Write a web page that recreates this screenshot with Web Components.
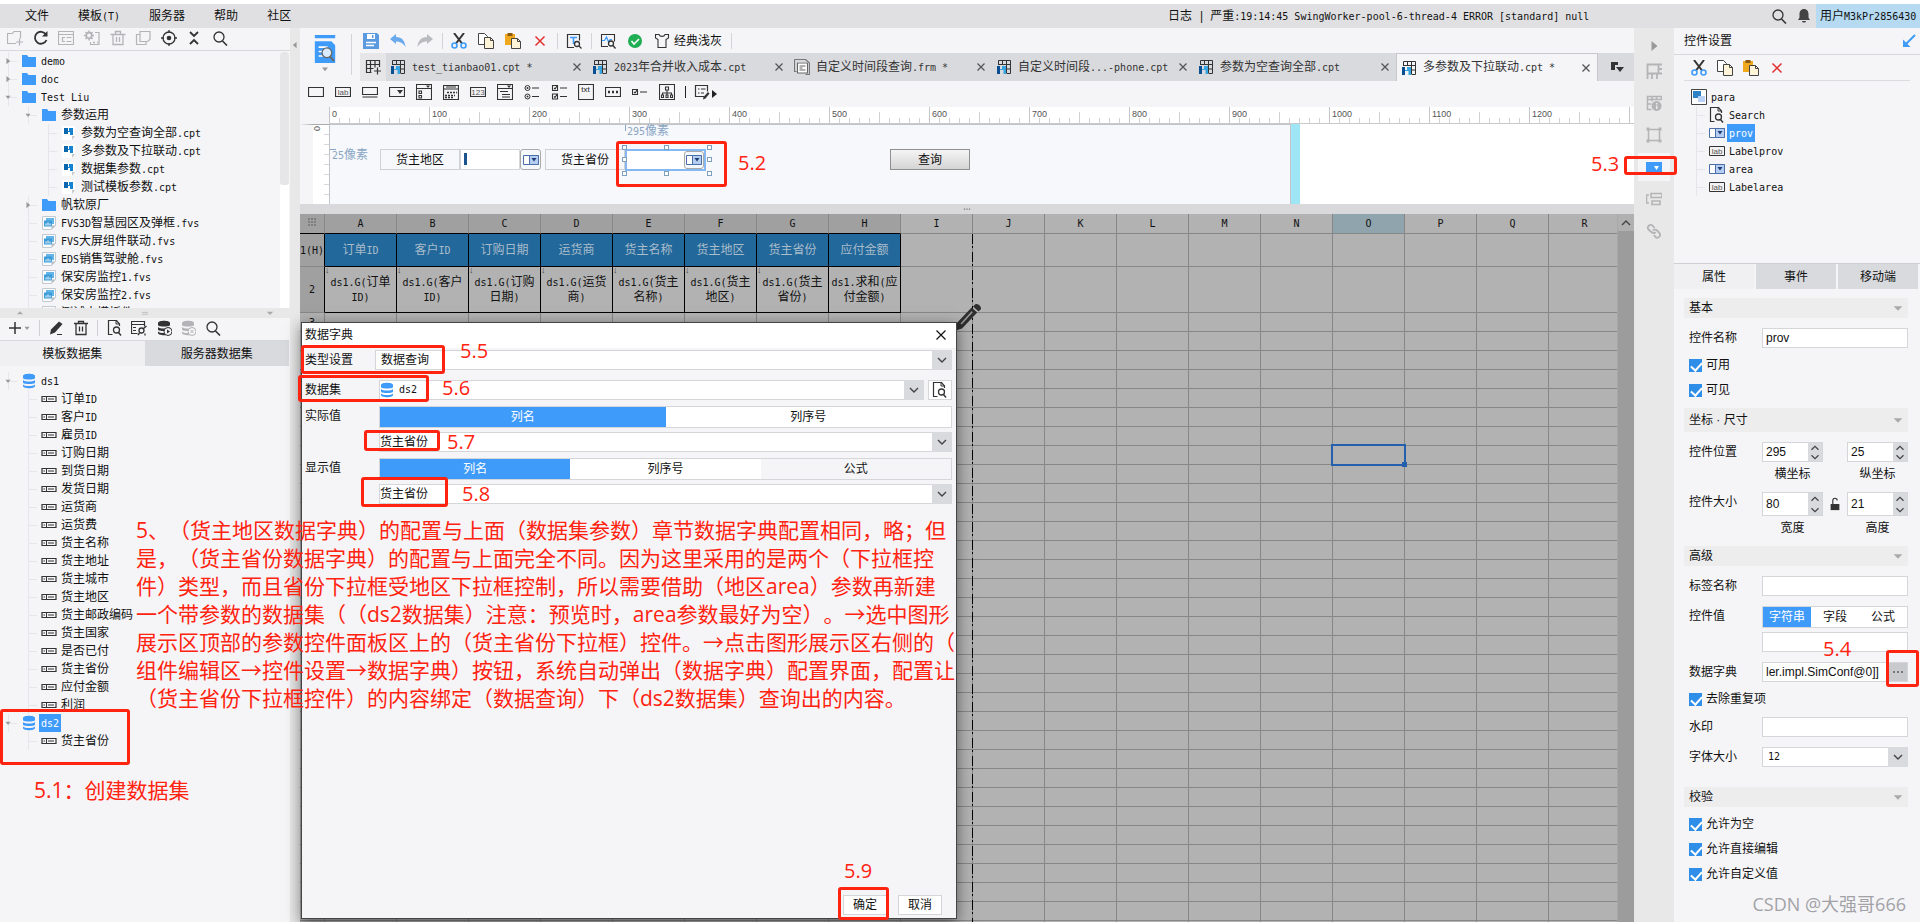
<!DOCTYPE html>
<html lang="zh-CN">
<head>
<meta charset="utf-8">
<title>报表设计器</title>
<style>
html,body{margin:0;height:100%;background:#fff}
body{font:12px/18px "Liberation Sans","Noto Sans CJK SC",sans-serif;color:#111;overflow:hidden}
</style>
</head>
<body>
<fr-app></fr-app>
<script>
/* ---------- shared helpers ---------- */
const BASE = `
*{box-sizing:border-box}
:host{display:block;min-width:0}
:host([hidden]){display:none}
.a{font-family:"DejaVu Sans Mono",monospace;font-size:10px;white-space:pre}
button,input,select{font:inherit;color:inherit;margin:0;border-radius:0}
button{background:none;border:0;padding:0;display:flex;align-items:center;justify-content:center;white-space:nowrap;cursor:pointer}
ul{list-style:none;margin:0;padding:0}
a{color:inherit;text-decoration:none}
`;
const mono = s => s.replace(/[\x20-\x7e]+/g, m => `<span class="a">${m}</span>`);
const def = (name, css, html) => customElements.define(name, class extends HTMLElement {
  connectedCallback() {
    if (this.shadowRoot) return;
    const tpl = document.createElement('template');
    tpl.innerHTML = `<style>${BASE}${css}</style>${html(this)}`;
    this.attachShadow({ mode: 'open' }).append(tpl.content.cloneNode(true));
  }
});

/* ---------- icons, 16 x 16 ---------- */
const K = '#333', G = '#b4b4b7', B = '#3f9bfa';
const s = (d, c = K, w = 1) => `<path d="${d}" fill="none" stroke="${c}" stroke-width="${w}"/>`;
const f = (d, c = K) => `<path d="${d}" fill="${c}"/>`;
const lens = (x, y, r, c = K) => `<circle cx="${x}" cy="${y}" r="${r}" fill="none" stroke="${c}" stroke-width="1.3"/>`;
const txt = (x, y, t, z = 8, c = '#555') => `<text x="${x}" y="${y}" font-size="${z}" text-anchor="middle" font-family="Liberation Sans" fill="${c}">${t}</text>`;
const combo = '<path d="M.5 3.5h15v9H.5z" fill="#fff" stroke="#4a6ea8"/><path d="M6.500 3.500h9v9h-9z" fill="#b5cdf0" stroke="#4a6ea8"/><path d="M8.500 6h5L11 9.500z" fill="#1d3c78"/>';
const pageLens = s('M12.500 6V4L9.500.500h-8v14h4', K, 1.200) + s('M9 .500V4h3.500', K) + lens(9.500, 10, 3) + s('M11.500 12.500l2.500 3', K, 1.400);
const DB = c => f('M2 3c0-3 12-3 12 0v2c0 2-12 2-12 0z', c) + f('M2 7c2 2 10 2 12 0v2.500c0 2-12 2-12 0z', c) + f('M2 11.500c2 2 10 2 12 0V13c0 3-12 3-12 0z', c);
const ICONS = {
  folder: f('M1 2h5l1.500 2H15v10H1z', B),
  cpt: f('M1 1h13v10l-3 4H1z', '#fff') + f('M11 15v-4h3z', '#c5c8cc') + f('M3 3h4v3h1V3h4v7h-3V7H7v2H3z', '#1583d2') + f('M3 3h4v6H3z', '#0b67ad'),
  fvs: f('M1.500 1.500h13v9l-4 4h-9z', '#fafcff') + s('M1.500 1.500h13v9l-4 4h-9z', '#c2c9d1') + f('M5 3h8v6H5z', '#64b4e8') + f('M3 5.500h8v6H3z', '#3c9cd8') + s('M5 10.500v-2M7 10.500v-3M9 10.500v-2', '#fff') + f('M10.500 14.500v-4h4z', '#b9c0c8'),
  field: s('M1 5.500h14v5H1z', K, 1.200) + s('M5.500 5.500v5M7 8h6M2.500 8h1.500', K),
  db: DB(B),
  folderplus: s('M9 13.500H.500v-10h5l1.500-2h6.500v7', G, 1.200) + s('M12.500 8.500v7M9 12h7', G, 1.200),
  refresh: s('M13 4.500A6 6 0 1 0 13.500 10', K, 1.800) + f('M14.500 1v5.500H9z', K),
  panel: s('M.500 1.500h15v13H.500zM.500 4.500h15M4.500 7v5M4.500 7.500H7M4.500 11.500H7M8.500 7.500h5M8.500 11.500h5', G, 1.200),
  gearpanel: `<circle cx="5" cy="5.500" r="2.800" fill="none" stroke="${G}" stroke-width="1.800"/>` + s('M5 .500v2M5 8.500v2M0 5.500h2M8 5.500h2M1.500 2l1.500 1.500M8.500 9L7 7.500M8.500 2L7 3.500M1.500 9L3 7.500', G, 1.500) + s('M11 2.500h4v12H6.500V12', G, 1.200) + s('M9 12.500h2M13 12.500h1', G, 1.500),
  trashg: s('M.500 4.500h15M3 4.500v10h10v-10M5.500 4V1.500h5V4M6.500 7v5M9.500 7v5', G, 1.300),
  trash: s('M1 3.500h14M3 3.500v11h10v-11M5.500 3.500v-2h5v2M6.500 6.500v5M9.500 6.500v5', K, 1.300),
  copyg: s('M5 1.500h10v8l-2.500 2H5zM5 4.500H1.500v10H11V12', G, 1.200),
  target: `<circle cx="8" cy="8" r="6" fill="none" stroke="${K}" stroke-width="1.300"/><circle cx="8" cy="8" r="2.300" fill="${K}"/>` + s('M8 0v3M8 13v3M0 8h3M13 8h3', K, 1.300),
  collapse: s('M4 2l4 4 4-4M4 14l4-4 4 4', K, 1.800),
  search: lens(7, 7, 5) + s('M10.500 11l4.500 4.500', K, 1.600),
  plus: s('M8 2v12M2 8h12', K, 1.500),
  down: f('M4 6h8l-4 5z', '#999'),
  up: f('M3 10h10L8 5z', '#aaa'),
  tridown: f('M3 6h10l-5 5z', '#aaa'),
  right: f('M5.500 3v10l6-5z', '#999'),
  left: f('M10.500 3v10l-6-5z', '#999'),
  pencil: f('M11 1.500l3.500 2.500-7.500 8.500-5 2 1-5z', K) + s('M9 14.500h5', K),
  tableplug: s('M6.500 13.500h-6v-12h13v5M.500 4.500h13M2 7.500h3M2 10.500h3', K, 1.200) + `<circle cx="10.500" cy="10.500" r="2.500" fill="none" stroke="${K}" stroke-width="1.300"/>` + s('M8.500 13L7 15M12.500 8.500l3-2.500M14 13.500v2', K, 1.300),
  dbplay: DB(K) + `<circle cx="12" cy="11.500" r="4" fill="#f5f5f8" stroke="${K}"/>` + f('M11 9.500v4l3-2z', K),
  dbx: DB(G) + `<circle cx="12" cy="11.500" r="4" fill="#f5f5f8" stroke="${G}"/>` + s('M10.500 10l3 3M13.500 10l-3 3', G),
  pagelens: pageLens,
  save: f('M0 0h14l2 2v14H0z', '#5b9ade') + f('M4 1h8v5H4z', '#fff') + f('M9 2h1.500v3H9z', '#5b9ade') + s('M3 9.500h10M3 12.500h8', '#fff', 1.300),
  undo: f('M0 6l6-5v3c6 0 9 4 9.500 10C13 10 10 8.500 6 8.500V11z', '#6aa9ec'),
  redo: f('M16 6l-6-5v3C4 4 1 8 .500 14 3 10 6 8.500 10 8.500V11z', '#b9bbbe'),
  cut: s('M3 0l8 10.500M13 0L5 10.500', K, 2) + `<circle cx="3.500" cy="12.500" r="2.500" fill="none" stroke="${B}" stroke-width="1.600"/><circle cx="12.500" cy="12.500" r="2.500" fill="none" stroke="${B}" stroke-width="1.600"/>`,
  copy: '<path d="M.500.500h6l3 3v8h-9z" fill="#fff" stroke="#444"/><path d="M6.500 4.500h6l3 3v8h-9z" fill="#fff3d8" stroke="#444"/><path d="M12.500 4.500v3h3" fill="none" stroke="#444"/>',
  paste: f('M0 1h10v11H0z', '#f0a81c') + f('M2.500 0h5v3h-5z', '#8a5a10') + '<path d="M6.500 5.500h6l3 3v7h-9z" fill="#fff3d8" stroke="#444"/><path d="M12.500 5.500v3h3" fill="none" stroke="#444"/>',
  del: s('M3.500 3.500l9 9M12.500 3.500l-9 9', '#e03030', 1.500),
  tsearch: s('M8 14.500H1.500v-13h12v6', K, 1.200) + s('M4 4.500h7M7.500 4.500V11', B, 1.600) + lens(11, 11, 2.500) + s('M13 13l2.500 2.500', K, 1.300),
  monitor: s('M8 13.500H1.500v-12h13v7', K, 1.100) + s('M2 7.500h2.500L6.500 4l2 5 1.500-2.500h2', B, 1.200) + lens(11, 10.500, 2.500) + s('M13 12.500l2.500 3', K, 1.300),
  ok: '<circle cx="8" cy="8" r="7" fill="#1fae54"/>' + s('M4.500 8l2.500 3 5-5', '#fff', 1.600),
  shirt: s('M5 1.500H1.500v3.500L4 6.500v8h8v-8l2.500-1.500V1.500H11c-1 2.500-5 2.500-6 0z', K, 1.100),
  newtab: s('M1.500 12V1.500h13V8M1.500 5.500h13M1.500 9.500h7M5.500 1.500v12M10 1.500v7M9 12h7M12.500 8.500v7M1.500 12v1.500h5', K, 1.200),
  sheet: s('M2.500 6V1.500h12v13H11M2.500 5.500h12M6.500 1.500v4M10.500 1.500v13M10.500 10h4', K, 1) + f('M1 7h3v3h2V7h4v8H7.500v-4H4v4H1z', '#35a4e0') + f('M1 7h3v8H1z', '#0b4f93'),
  frm: s('M.500.500h11l4 3.500v11.500h-4', '#777', 1.200) + s('M.500.500v12h2', '#777', 1.200) + f('M3 3h11v11H3z', '#fff') + s('M3.500 4h10v10h-10zM5.500 7h6M5.500 9h3M5.500 11h6', '#666', 1.100),
  close: s('M4.500 4.500l7 7M11.500 4.500l-7 7', '#555', 1.300),
  closeb: s('M3.500 3.500l9 9M12.500 3.500l-9 9', '#111', 1.200),
  tabmenu: f('M2 3h7v3H6v5H2z', K) + f('M7 8h8l-4 5z', K),
  w1: s('M.500 3.500h15v9H.500z', K, 1.200),
  w2: s('M.500 3.500h15v9H.500z', K, 1.200) + txt(8, 10.800, 'lab'),
  w3: s('M.500 3.500h15v7H.500zM.500 13h15', K, 1.200),
  w4: s('M.500 3.500h15v9H.500z', K, 1.200) + f('M8 6h6l-3 4z'),
  w5: s('M.500.500h15v15H.500zM.500 4.500h15M3 7h2.500v2.500H3zM3 11.500h2.500V14H3z', K, 1.100) + f('M10 1.500h4L12 4z'),
  w6: s('M.500 1.500h15v14H.500zM.500 5h15', K, 1.200) + s('M3 3h10', K) + '<path d="M4 8.500h10M2 11.500h10M2 13.500h8" stroke="#333" stroke-width="1.500" stroke-dasharray="2 1" fill="none"/>',
  w7: s('M.500 3.500h15v9H.500z', K, 1.200) + txt(8, 10.800, '123', 8),
  w8: s('M.500.500h15v15H.500zM.500 4.500h15M3 7.500h8M5 10.500h8M5 13h8', K, 1.100) + f('M10 1.500h4L12 4z'),
  w9: s('M8 4h7M8 12.500h7', K, 1.200) + '<circle cx="3.500" cy="4" r="2.500" fill="none" stroke="#333"/><circle cx="3.500" cy="12.500" r="2.500" fill="none" stroke="#333"/><circle cx="3.500" cy="4" r="1" fill="#333"/><circle cx="3.500" cy="12.500" r="1" fill="#333"/>',
  w10: s('M1.500 1.500h5v5h-5zM1.500 10h5v5h-5zM9 4h7M9 12.500h7M3 4l1 1 2-3M3 12.500l1 1 2-3', K, 1.100),
  w11: s('M.500.500h15v15H.500z', K, 1.200) + txt(7.500, 8, 'txt', 8, '#222'),
  w12: s('M.500 3.500h15v9H.500z', K, 1.200) + '<path d="M3 8h11" stroke="#333" stroke-width="2.500" stroke-dasharray="2 2" fill="none"/>',
  w13: s('M.500 5.500h5v5h-5zM2 8l1 1 2-3M8 8h7', K, 1.100),
  w14: s('M.500.500h15v15H.500zM6.500 3h3v3h-3zM8 6v3M3.500 11V9h9v2M2.500 11h2v2.500h-2zM7 11h2v2.500H7zM11.500 11h2v2.500h-2zM8 9v2', K, 1.100),
  w15: s('M10 12.500H1.500v-11h12v6M4 5h1.500M4 9h1.500M7 5h4.500M7 9h3', K, 1.200) + f('M14 8l1.500 1.500-4 5-2.500 1 .500-2.500z'),
  caret: f('M5 6v8l5-4z', '#222'),
  bell: f('M8 1c3 0 4.500 2.500 4.500 5v3.500l1.500 2.500H2l1.500-2.500V6C3.500 3.500 5 1 8 1zM6 13h4c0 2-4 2-4 0z', '#444'),
  dock: s('M14 2L4 12', B, 2) + f('M2 6.500V14h7.500z', B),
  s1: s('M1.500 16V1.500H16M1.500 10.500H16M12.500 1.500v9M12.500 6H16M6 10.500V16M11 10.500V16', G, 1.800),
  s2: s('M1.500 1.500h14v3h-14zM1.500 1.500v13h4M1.500 9h4M6 1.500v5M10.500 1.500v3', G, 1.500) + f('M10.500 6a5 5 0 1 0 .1 0zM10 8h1.500v1.500H10zM10 10.500h1.500V14H10z', G),
  s3: s('M2.500 2.500h11v11h-11z', G, 1.500) + f('M.500.500h3v3h-3zM12.500.500h3v3h-3zM.500 12.500h3v3h-3zM12.500 12.500h3v3h-3z', G),
  s4: f('M0 3h16v11H0z', B) + f('M8 7h5l-2.500 4z', '#fff'),
  s5: s('M5 2.500h11v4H5zM6 10h8v3.500H6zM3 4H.500v8H3', G, 1.600),
  s6: s('M8.500 5l-2-2.500c-3-2-6 1.500-4 4L6 9.500c1 1 3 .5 3.500-.5M7 7.500c1-1.500 3-1 4 0l2.500 2.500c2 3-1.500 6-4 4L8 12', G, 1.800),
  para: '<path d="M.500.500h15v15H.500z" fill="#fff" stroke="#444"/>' + f('M2 2h8v7H2z', '#2c82c4') + f('M7 7h7v6H7z', '#b9d2f5'),
  combo, lab: '<path d="M.500 3.500h15v9H.500z" fill="#f2f2f2" stroke="#333"/>' + txt(8, 10.800, 'lab'),
  lock: f('M3 8h10v7H3z', K) + s('M5.500 8V4c0-3.500 5-3.500 5 0', K, 1.300),
  chev: s('M4 6l4 4 4-4', '#444', 1.400),
  chevup: s('M4 10l4-4 4 4', '#444', 1.400),
  grip: '<path d="M3 4h11M3 8h11M3 12h11" stroke="#666" stroke-width="2" stroke-dasharray="2 2" fill="none"/>',
  bigpen: f('M11.500.800c1.200-1.100 4 1.200 3.200 2.800l-1.200 1.200-3.200-2.800z', '#2e2e2e') + f('M9.500 2.600l3.200 2.800L4 14.500l-4 1.300.600-4z', '#2e2e2e') + s('M9.800 5L3.500 12', '#9a9a9a', .9),
  bigsearch: f('M0 0h16v2.500H0zM0 5h13l3 3v14H0z', B) + s('M3 9.500h7M3 13h4M3 16.500h4', '#fff', 1.300) + '<circle cx="9.500" cy="14" r="3.800" fill="#d9ecff" stroke="#666"/>' + s('M12 17l3 3.500', '#666', 1.500),
  eq: s('M3 7h10M3 10h10', '#aaa'),
  dots: '<path d="M3 8h10" stroke="#777" stroke-width="2" stroke-dasharray="2 2" fill="none"/>'
};
def('fr-icon', `:host{display:inline-block;flex:none;width:16px;height:16px}svg{display:block;width:100%;height:100%}`,
  e => `<svg viewBox="0 0 16 ${e.getAttribute('vh') || 16}" aria-hidden="true">${ICONS[e.getAttribute('name')]}</svg>`);
const ic = (n, extra = '') => `<fr-icon name="${n}" ${extra}></fr-icon>`;
const ib = (n, label = n) => `<button aria-label="${label}">${ic(n)}</button>`;

/* ---------- menu bar ---------- */
def('fr-menubar', `
:host{background:#e0e0e2;height:24px}
nav{display:flex;align-items:center;height:24px;padding-left:25px;white-space:nowrap}
.m{margin-right:29px}
.log{margin-left:auto;width:603px}
.log b{font-weight:400;margin:0 7px 0 8px}
.right{display:flex;align-items:center;height:24px;width:149px}
.right button+button{margin:0 4px 0 9px}
.user{background:#b5daf2;height:24px;line-height:24px;padding-left:4px;width:104px}
`, () => `<nav>${['文件', '模板(T)', '服务器', '帮助', '社区'].map(x => `<a class="m" href="#">${mono(x)}</a>`).join('')}
<span class="log">日志<b>|</b>${mono('严重:19:14:45 SwingWorker-pool-6-thread-4 ERROR [standard] null')}</span>
<span class="right">${ib('search', '搜索')}${ib('bell', '通知')}<a class="user" href="#">${mono('用户M3kPr2856430')}</a></span></nav>`);

/* ---------- tree ---------- */
const leaf = (d, i, t) => ({ d, i, t });
const TREES = {
  files: [{ d: 0, i: 'folder', t: 'demo', x: 'right' }, { d: 0, i: 'folder', t: 'doc', x: 'right' }, { d: 0, i: 'folder', t: 'Test Liu', x: 'down' },
  { d: 1, i: 'folder', t: '参数运用', x: 'down' }, ...['参数为空查询全部.cpt', '多参数及下拉联动.cpt', '数据集参数.cpt', '测试模板参数.cpt'].map(t => leaf(2, 'cpt', t)),
  { d: 1, i: 'folder', t: '帆软原厂', x: 'right' }, ...['FVS3D智慧园区及弹框.fvs', 'FVS大屏组件联动.fvs', 'EDS销售驾驶舱.fvs', '保安房监控1.fvs', '保安房监控2.fvs', '测试大模板件.fvs'].map(t => leaf(1, 'fvs', t))],
  data: [{ d: 0, i: 'db', t: 'ds1', x: 'down' }, ...['订单ID', '客户ID', '雇员ID', '订购日期', '到货日期', '发货日期', '运货商', '运货费', '货主名称', '货主地址', '货主城市', '货主地区', '货主邮政编码', '货主国家', '是否已付', '货主省份', '应付金额', '利润'].map(t => leaf(1, 'field', t)),
  { d: 0, i: 'db', t: 'ds2', x: 'down', sel: 1 }, leaf(1, 'field', '货主省份')],
  widgets: [{ d: 0, i: 'para', t: 'para', root: 1 }, leaf(1, 'pagelens', 'Search'), { d: 1, i: 'combo', t: 'prov', sel: 1 }, leaf(1, 'lab', 'Labelprov'), leaf(1, 'combo', 'area'), leaf(1, 'lab', 'Labelarea')]
};
def('fr-tree', `
li{display:flex;align-items:center;height:18px;white-space:nowrap;padding-left:calc(var(--x,4px) + var(--d)*20px)}
.g{width:17px;height:18px;flex:none;display:flex;align-items:center;
background:linear-gradient(#e6e6ea,#e6e6ea) 4px 0/1px 100% no-repeat,linear-gradient(#e6e6ea,#e6e6ea) 4px 9px/9px 1px no-repeat}
.g.none{background:none}
.g fr-icon{width:10px;height:12px;margin-left:-1px}
.t{margin-left:2px;padding:0 2px;height:18px;line-height:18px}
.sel{background:${B};color:#fff}
`, e => `<ul role="tree">${TREES[e.getAttribute('kind')].map(n => `<li role="treeitem" style="--d:${n.d}"><span class="g ${n.root ? 'none' : ''}">${n.x ? ic(n.x) : ''}</span>${ic(n.i)}<span class="t ${n.sel ? 'sel' : ''}">${mono(n.t)}</span></li>`).join('')}</ul>`);

/* ---------- left side ---------- */
def('fr-left', `
:host{display:flex;flex-direction:column;background:#f5f5f8;overflow:hidden}
.bar{display:flex;align-items:center;justify-content:space-between;height:22px;padding:0 62px 2px 7px;flex:none}
.files{height:258px;flex:none;border-top:1px solid #d8d8dc;padding-top:1px;display:flex;overflow:hidden;margin-top:0}
.files fr-tree{flex:1}
.sb{width:9px;background:#fff;margin-right:1px}
.sb div{height:133px;background:#e6e6e9;border-radius:3px}
.split{height:10px;background:#e8e8e8;display:flex;align-items:center;justify-content:space-between;padding:0 12px;flex:none}
.split fr-icon{height:10px}
.bar2{padding:0 69px 2px 7px}
.bar2 i{width:1px;height:16px;background:#d0d0d4}
.add{margin-right:-2px}.add fr-icon+fr-icon{width:10px;margin-left:-1px}
.tabs{display:flex;height:26px;border-top:1px solid #d8d8dc;flex:none;margin-right:1px}
.tabs button{flex:1;background:#f0f0f3}
.tabs button+button{background:#d8dade}
fr-tree.d{padding-top:6px}
`, () => `<div class="bar">${['folderplus', 'refresh', 'panel', 'gearpanel', 'trashg', 'copyg', 'target', 'collapse', 'search'].map(n => ib(n)).join('')}</div>
<div class="files"><fr-tree kind="files"></fr-tree><div class="sb"><div></div></div></div>
<div class="split">${ic('up')}${ic('eq')}${ic('tridown')}</div>
<div class="bar bar2"><button class="add" aria-label="新建">${ic('plus')}${ic('down')}</button><i></i>${ib('pencil')}${ib('trash')}<i></i>${['pagelens', 'tableplug', 'dbplay', 'dbx', 'search'].map(n => ib(n)).join('')}</div>
<div class="tabs" role="tablist"><button role="tab">模板数据集</button><button role="tab">服务器数据集</button></div>
<fr-tree class="d" kind="data"></fr-tree>`);

/* ---------- top of the centre column ---------- */
def('fr-toolbars', `
.top{display:grid;grid-template-columns:60px 1fr;height:53px}
.big{border-right:1px solid #d4d4d8;margin:6px 8px 6px 0;padding:1px 14px 0;width:52px}
.big fr-icon{width:22px;height:28px}.big fr-icon+fr-icon{width:12px;height:12px}
.big button{flex-direction:column}
.tools{display:flex;align-items:center;height:25px;padding-left:3px}
.tools button{margin-right:11px;gap:4px}
.tools i{width:1px;height:16px;background:#d4d4d8;margin:0 8px 0 -2px}
.tabs{display:flex;height:28px;background:#d9dadd;color:#333}
.new{width:26px;background:#e6e6e9}
.tab{width:202px;display:flex;align-items:center;padding:0 3px 0 4px;white-space:nowrap;min-width:0}
.tab span.n{margin:0 auto 0 6px}
.tab.on{background:#f5f5f8;border:solid #c8c8cc;border-width:1px 1px 0}
.menu{width:38px}
.wid{display:flex;height:26px;padding:3px 0 0 8px;gap:11px}
.wid button{height:16px}.wid i{width:1px;height:12px;background:#222;margin:2px -3px 0 -1px}
.wid button:last-child{margin-left:-14px}
`, () => `<div class="top"><div class="big"><button aria-label="预览">${ic('bigsearch', 'vh="22"')}${ic('down')}</button></div>
<div><div class="tools">${ib('save', '保存')}${ib('undo', '撤销')}${ib('redo', '重做')}<i></i>${ib('cut')}${ib('copy')}${ib('paste')}${ib('del')}<i></i>${ib('tsearch')}<i></i>${ib('monitor')}${ib('ok')}<button>${ic('shirt')}经典浅灰</button><i></i></div>
<div class="tabs"><button class="new" aria-label="新建">${ic('newtab')}</button>${[['sheet', 'test_tianbao01.cpt *'], ['sheet', '2023年合并收入成本.cpt'], ['frm', '自定义时间段查询.frm *'], ['sheet', '自定义时间段...-phone.cpt'], ['sheet', '参数为空查询全部.cpt'], ['sheet', '多参数及下拉联动.cpt *']].map((x, i) => `<div class="tab ${i == 5 ? 'on' : ''}">${ic(x[0])}<span class="n">${mono(x[1])}</span><button aria-label="关闭">${ic('close')}</button></div>`).join('')}<button class="menu" aria-label="更多">${ic('tabmenu')}</button></div></div></div>
<div class="wid">${Array.from({ length: 14 }, (_, i) => ib('w' + (i + 1))).join('')}<i></i>${ib('w15')}${ib('caret')}</div>`);

/* ---------- ruler and parameter pane ---------- */
def('fr-params', `
:host{overflow:hidden;color:#111}
.ruler{height:17px;margin-left:29px;border-bottom:1px solid #c9c9cc;display:flex;overflow:hidden;color:#555;font-size:9px;line-height:14px;
background:repeating-linear-gradient(90deg,#c6c6ca 0 1px,transparent 1px 100px),repeating-linear-gradient(90deg,#d2d2d6 0 1px,transparent 1px 50px) 0 5px,repeating-linear-gradient(90deg,#d2d2d6 0 1px,transparent 1px 10px) 0 11px,#fff;background-repeat:repeat-x}
.ruler span{flex:none;width:100px;padding-left:3px}
.row{display:flex;height:80px;background:#fff}
.v{width:29px;border-left:13px solid #f5f5f8;border-top:1px solid #aaa;flex:none;font-size:9px;line-height:12px;color:#555;
background:repeating-linear-gradient(#d8d8dc 0 1px,transparent 1px 10px) 11px 9px/6px 70px no-repeat,#fff}
.v span{display:block;writing-mode:vertical-rl;margin:1px 0 0 -1px;line-height:10px}
.pane{position:relative;width:962px;background:#f7f8fb;border:solid #c3c4c8;border-width:1px 1px 0 1px}
.edge{width:9px;background:#9ee5f5}
.pane>*{position:absolute}
.dim{color:#8aa6c4;border:0 solid #8aa6c4;line-height:14px;white-space:nowrap}
.lb{border:1px solid #cfd0d4;width:80px;height:21px;line-height:20px;text-align:center}
.lb,.in,.q,.dd{top:24px}
.in{background:#fff;width:60px;height:21px;border:1px solid #d5d6da}
.cur{top:28px;left:134px;width:3px;height:12px;background:#1c5490}
.dd{width:21px;height:21px;border:1px solid #aaa;border-radius:3px;background:#f4f7fb}
.sel{left:295px;top:24px;width:81px;height:22px;border:2px solid #85b8f2;background:#fff;display:flex;justify-content:flex-end}
.sel button{width:20px;border:1px solid #aaa;border-radius:3px;background:#f4f7fb}
.h{width:5px;height:5px;border:1px solid #7f9fbf;background:#fff}
.q{left:560px;width:80px;height:21px;border:1px solid #909090;background:linear-gradient(#f5f5f5,#d4d4d4)}
.split{height:10px;background:#d9d9dc;display:flex;justify-content:center;align-items:center}
.split fr-icon{width:12px;height:10px}
`, () => `<div class="ruler">${Array.from({ length: 13 }, (_, i) => `<span>${i * 100}</span>`).join('')}</div>
<div class="row"><div class="v"><span>0</span></div><div class="pane">
<span class="dim" style="left:297px;top:-1px">${mono('295')}像素</span><span class="dim" style="left:295px;top:0;height:6px;border-left-width:1px"></span>
<span class="dim" style="left:2px;top:23px">${mono('25')}像素</span><span class="dim" style="left:0;top:24px;width:6px;border-top-width:1px"></span>
<label class="lb" for="area" style="left:50px">货主地区</label><input id="area" class="in" style="left:130px"><span class="cur"></span><button class="dd" style="left:190px" aria-label="展开">${ic('combo')}</button>
<label class="lb" style="left:215px" id="lp">货主省份</label><div class="sel" role="combobox" aria-labelledby="lp" aria-expanded="false"><button aria-label="展开">${ic('combo')}</button></div>
${[20, 32, 46].flatMap((y, j) => [292, 334, 377].filter((x, k) => !(j == 1 && k == 1)).map(x => `<span class="h" style="left:${x}px;top:${y}px"></span>`)).join('')}
<button class="q">查询</button></div><div class="edge"></div></div>
<div class="split">${ic('dots')}</div>`);

/* ---------- report sheet ---------- */
def('fr-sheet', `
:host{display:flex;overflow:hidden;background:#b2b2b2;position:relative}
.view{flex:1;overflow:hidden;min-width:0}
table{table-layout:fixed;width:1321px;border-spacing:0;border-collapse:separate}
th,td{padding:0;border:solid #878787;border-width:0 1px 1px 0;font-weight:400;text-align:center;line-height:15px;height:19px}
thead th{height:20px;color:#111}
tbody th{white-space:nowrap}
.used{background:#a0a0a0}.cur{background:#8fa4ac}
thead .used{border-bottom-color:#000}
tr.k th{border-right-color:#000;background:#a0a0a0}
.hd{background:#22689a;color:#a9bccb;border-color:#000;height:33px}
.c{border-color:#000;height:46px;position:relative;vertical-align:middle}
.c.x::before{content:"↓";position:absolute;left:0;top:-3px;font-size:9px;line-height:12px;color:#444}
.sel{position:relative}
.sel::before{content:"";position:absolute;inset:-2px;border:2px solid #2560ae}
.sel::after{content:"";position:absolute;right:-3px;bottom:-3px;width:5px;height:5px;background:#2560ae}
.page{position:absolute;left:672px;top:20px;bottom:0;width:1px;background:repeating-linear-gradient(#000 0 10px,transparent 10px 12px,#000 12px 14px,transparent 14px 18px)}
.sb{width:17px;background:#9c9c9c;border-left:1px solid #a8a8a8;position:relative}
.sb button{width:16px;height:17px;background:#b0b0b0}
.pen{position:absolute;left:655px;top:88px;width:28px;height:30px}
`, () => {
  const cols = [...'ABCDEFGHIJKLMNOPQR'];
  const h = ['订单ID', '客户ID', '订购日期', '运货商', '货主名称', '货主地区', '货主省份', '应付金额'];
  const c = [['ds1.G(订单', 'ID)'], ['ds1.G(客户', 'ID)'], ['ds1.G(订购', '日期)'], ['ds1.G(运货', '商)'], ['ds1.G(货主', '名称)'], ['ds1.G(货主', '地区)'], ['ds1.G(货主', '省份)'], ['ds1.求和(应', '付金额)']];
  const rest = n => '<td></td>'.repeat(n);
  let r = '';
  for (let i = 3; i < 36; i++) r += `<tr><th>${i == 3 ? mono('3') : ''}</th>${i == 10 ? rest(14) + '<td class="sel"></td>' + rest(3) : rest(18)}</tr>`;
  return `<div class="view"><table><colgroup><col style="width:25px">${'<col style="width:72px">'.repeat(18)}</colgroup>
<thead><tr><th class="used">${ic('grip', 'style="width:12px;height:12px"')}</th>${cols.map((x, i) => `<th class="${i < 8 ? 'used' : x == 'O' ? 'cur' : ''}">${mono(x)}</th>`).join('')}</tr></thead>
<tbody><tr class="k"><th>${mono('1(H)')}</th>${h.map(x => `<td class="hd">${mono(x)}</td>`).join('')}${rest(10)}</tr>
<tr class="k"><th>${mono('2')}</th>${c.map((x, i) => `<td class="c ${i < 7 ? 'x' : ''}">${x.map(mono).join('<br>')}</td>`).join('')}${rest(10)}</tr>${r}</tbody></table></div>
<div class="page"></div>${ic('bigpen', 'class="pen"')}<div class="sb"><button aria-label="向上">${ic('chevup')}</button></div>`;
});

/* ---------- form parts ---------- */
def('fr-select', `
:host{position:relative;height:20px;flex:1}
select{appearance:none;width:100%;height:20px;border:1px solid #d5d6da;background:#fff;padding:0 20px 0 var(--pad,5px);line-height:18px;display:block}
:host([latin]) select{font-family:"DejaVu Sans Mono",monospace;font-size:10px}
.b{position:absolute;right:0;top:0;width:20px;height:20px;background:#d8dade;display:grid;place-items:center;pointer-events:none}
.i{position:absolute;left:0;top:2px}
`, e => `<select aria-label="${e.getAttribute('label')}"><option>${e.getAttribute('value')}</option></select>${e.hasAttribute('icon') ? `<span class="i">${ic(e.getAttribute('icon'))}</span>` : ''}<span class="b">${ic('chev')}</span>`);
def('fr-seg', `
:host{flex:1;height:22px}
div{display:flex;height:22px;border:1px solid #d5d6da;background:#fff}
button{flex:1;min-width:0}
button:first-child{background:${B};color:#fff}
:host([dim]) button:last-child{background:#f5f5f8}
`, e => `<div role="group">${e.getAttribute('items').split(',').map(x => `<button>${x}</button>`).join('')}</div>`);
def('fr-check', `
:host{height:15px}
label{display:flex;align-items:center;height:15px;padding-left:5px;gap:4px;line-height:15px}
input{appearance:none;width:13px;height:13px;background:#2f8fe8;position:relative;flex:none}
input:checked::before{content:"";position:absolute;left:4px;top:1px;width:5px;height:9px;border:solid #fff;border-width:0 2px 2px 0;transform:rotate(42deg)}
`, e => `<label><input type="checkbox" checked><span>${e.textContent}</span></label>`);
def('fr-section', `
:host{background:#ededee;height:20px}
:host([tall]){height:24px}
button{width:100%;height:100%;justify-content:space-between;padding:0 2px 0 5px}
fr-icon{width:16px;height:14px}
`, e => `<button>${e.textContent}${ic('tridown')}</button>`);
def('fr-field', `
.row{display:flex;align-items:flex-start}
.n{width:78px;padding-left:5px;flex:none;line-height:20px}
.c{flex:1;display:flex;flex-direction:column;gap:4px;min-width:0}
::slotted(fr-seg),::slotted(fr-select){flex:none}
`, e => `<div class="row"><span class="n">${e.getAttribute('name')}</span><div class="c"><slot></slot></div></div>`);
def('fr-input', `
:host{height:20px}
div{display:flex}
input{flex:1;min-width:0;height:20px;border:1px solid #d5d6da;background:#fff;padding:0 3px;outline:0}
button{width:20px;height:20px;background:#c9cacd;border:1px solid #d5d6da}
`, e => `<div><input aria-label="${e.getAttribute('label')}" value="${e.getAttribute('value') || ''}">${e.hasAttribute('more') ? `<button aria-label="更多">${ic('dots')}</button>` : ''}</div>`);
def('fr-spin', `
:host{width:61px}
.b{display:flex;height:var(--h,20px);border:1px solid #d5d6da;background:#fff}
input{flex:1;width:20px;border:0;background:none;padding:0 3px;outline:0}
.s{width:14px;background:#d8dade;display:flex;flex-direction:column}
.s button{flex:1;min-height:0;overflow:hidden}
.s fr-icon{width:14px;height:14px}
label{display:block;height:20px;line-height:24px;text-align:center}
`, e => `<div class="b"><input id="v" value="${e.getAttribute('value')}"><span class="s"><button aria-label="增加">${ic('chevup')}</button><button aria-label="减少">${ic('chev')}</button></span></div><label for="v">${e.getAttribute('label')}</label>`);

/* ---------- dialog ---------- */
def('fr-dialog', `
:host{background:#f5f5f8;border:1px solid #444;box-shadow:0 4px 14px rgba(0,0,0,.5);display:flex;flex-direction:column}
header{display:flex;justify-content:space-between;align-items:center;height:25px;background:#fff;padding:0 7px 2px 3px}
form{display:flex;flex-direction:column;padding:2px 4px 0 3px}
.r{display:flex;line-height:20px;margin-bottom:4px}
.l{width:74px;flex:none}
.r.g10{margin-bottom:10px}.r.g6{margin-bottom:6px}.r.wide .l{width:70px}
.pv{width:24px;height:20px;margin-left:4px;border:1px solid #d5d6da;background:#fff}
footer{display:flex;justify-content:flex-end;gap:11px;margin-top:auto;padding:0 14px 3px}
footer button{width:44px;height:20px;background:#fff;border:1px solid #d5d6da}
`, () => `<header><span>数据字典</span>${ib('closeb', '关闭')}</header><form>
<div class="r g10 wide"><span class="l">类型设置</span><fr-select label="类型设置" value="数据查询"></fr-select></div>
<div class="r g6"><span class="l">数据集</span><fr-select latin icon="db" style="--pad:19px" label="数据集" value="ds2"></fr-select><button type="button" class="pv" aria-label="预览">${ic('pagelens')}</button></div>
<div class="r"><span class="l">实际值</span><fr-seg items="列名,列序号"></fr-seg></div>
<div class="r g6"><span class="l"></span><fr-select style="--pad:0px" label="实际值" value="货主省份"></fr-select></div>
<div class="r"><span class="l">显示值</span><fr-seg dim items="列名,列序号,公式"></fr-seg></div>
<div class="r"><span class="l"></span><fr-select style="--pad:0px" label="显示值" value="货主省份"></fr-select></div>
</form><footer><button>确定</button><button>取消</button></footer>`);

/* ---------- right side ---------- */
def('fr-rail', `
:host{background:#e8e8e8}
div{display:flex;flex-direction:column;align-items:center;padding-top:9px}
button{width:32px;height:32px}
button:first-child{height:17px;margin-bottom:1px}
.on{height:28px;background:#f5f5f8;margin:2px 0}
`, () => `<div>${ib('right')}${ib('s1')}${ib('s2')}${ib('s3')}<button class="on" aria-label="控件设置">${ic('s4')}</button>${ib('s5')}${ib('s6')}</div>`);
def('fr-props', `
:host{background:#f5f5f8;overflow:hidden}
header{display:flex;align-items:center;justify-content:space-between;height:27px;border-bottom:1px solid #d8d8dc;padding:0 3px 0 10px}
.bar{display:flex;align-items:center;gap:10px;height:26px;margin:0 10px;padding-left:7px;border-bottom:1px solid #dcdce0}
fr-tree{--x:-2px;height:182px;padding-top:7px}
.tabs{display:flex;height:26px;border-top:1px solid #d0d0d4}
.tabs button{flex:1;background:#d8dade;border-right:2px solid #f5f5f8}
.tabs button:first-child{background:#f0f0f3}
.form{display:flex;flex-direction:column;gap:10px;padding:9px 12px 0 10px}
.two{display:flex;justify-content:space-between}
.two fr-icon{width:14px;margin-top:4px}
.gap{margin-top:10px}
`, () => `<header><span>控件设置</span>${ib('dock', '停靠')}</header>
<div class="bar">${ib('cut')}${ib('copy')}${ib('paste')}${ib('del')}</div>
<fr-tree kind="widgets"></fr-tree>
<div class="tabs" role="tablist"><button role="tab">属性</button><button role="tab">事件</button><button role="tab">移动端</button></div>
<div class="form"><fr-section>基本</fr-section>
<fr-field name="控件名称"><fr-input label="控件名称" value="prov"></fr-input></fr-field>
<fr-check>可用</fr-check><fr-check>可见</fr-check>
<fr-section tall>坐标 · 尺寸</fr-section>
<fr-field name="控件位置"><div class="two"><fr-spin value="295" label="横坐标"></fr-spin><fr-spin value="25" label="纵坐标"></fr-spin></div></fr-field>
<fr-field name="控件大小"><div class="two" style="--h:24px"><fr-spin value="80" label="宽度"></fr-spin>${ic('lock')}<fr-spin value="21" label="高度"></fr-spin></div></fr-field>
<fr-section>高级</fr-section>
<fr-field name="标签名称"><fr-input label="标签名称"></fr-input></fr-field>
<fr-field name="控件值"><fr-seg items="字符串,字段,公式"></fr-seg><fr-input label="控件值"></fr-input></fr-field>
<fr-field name="数据字典"><fr-input more label="数据字典" value="ler.impl.SimConf@0]]"></fr-input></fr-field>
<fr-check>去除重复项</fr-check>
<fr-field name="水印"><fr-input label="水印"></fr-input></fr-field>
<fr-field name="字体大小"><fr-select latin label="字体大小" value="12"></fr-select></fr-field>
<fr-section class="gap">校验</fr-section>
<fr-check>允许为空</fr-check><fr-check>允许直接编辑</fr-check><fr-check>允许自定义值</fr-check></div>`);

/* ---------- tutorial annotations over the page ---------- */
def('fr-notes', `
:host{position:absolute;inset:0;pointer-events:none;color:#ff2310;font-family:"Open Sans","Noto Sans CJK SC",sans-serif;font-size:20px;line-height:28px;text-spacing-trim:space-all;white-space:nowrap}
.box,.n,p{position:absolute;margin:0}
.box{border:3px solid #ff2310;border-radius:3px}
p,.n.t{font-size:21px}
.wm{position:absolute;right:14px;bottom:4px;font-size:18px;color:#a2a2a6}
`, () => [[0, 709, 130, 56], [616, 141, 111, 46], [1624, 156, 53, 19], [1886, 650, 33, 37], [301, 345, 144, 29], [298, 375, 131, 27], [364, 430, 76, 21], [361, 477, 87, 30], [838, 887, 51, 33]]
  .map(b => `<div class="box" style="left:${b[0]}px;top:${b[1]}px;width:${b[2]}px;height:${b[3]}px"></div>`).join('')
+ [[738, 149, '5.2'], [1591, 150, '5.3'], [1823, 635, '5.4'], [460, 337, '5.5'], [442, 374, '5.6'], [447, 428, '5.7'], [462, 480, '5.8'], [844, 857, '5.9']]
  .map(n => `<span class="n" style="left:${n[0]}px;top:${n[1]}px">${n[2]}</span>`).join('')
+ `<span class="n t" style="left:34px;top:776px">5.1：创建数据集</span>
<p style="left:136px;top:516px">5、（货主地区数据字典）的配置与上面（数据集参数）章节数据字典配置相同，略；但<br>是，（货主省份数据字典）的配置与上面完全不同。因为这里采用的是两个（下拉框控<br>件）类型，而且省份下拉框受地区下拉框控制，所以需要借助（地区area）参数再新建<br>一个带参数的数据集（（ds2数据集）注意：预览时，area参数最好为空）。→选中图形<br>展示区顶部的参数控件面板区上的（货主省份下拉框）控件。→点击图形展示区右侧的（<br>组件编辑区→控件设置→数据字典）按钮，系统自动弹出（数据字典）配置界面，配置让<br>（货主省份下拉框控件）的内容绑定（数据查询）下（ds2数据集）查询出的内容。</p>
<span class="wm">CSDN @大强哥666</span>`);

/* ---------- application frame ---------- */
def('fr-app', `
:host{position:relative;display:grid;grid-template:4px 24px minmax(0,1fr)/290px 10px minmax(0,1fr) 40px 246px;height:100vh;overflow:hidden;background:#fff}
fr-menubar{grid-area:2/1/3/-1}
fr-left,.strip,.mid,fr-rail,fr-props{grid-row:3}
.strip{background:#e8e8e8;padding-top:9px}
.strip fr-icon{width:10px;height:16px}
.mid{display:flex;flex-direction:column;background:#f5f5f8;min-width:0}
fr-sheet{flex:1;min-height:0}
fr-dialog{position:absolute;left:301px;top:322px;width:656px;bottom:3px}
`, () => `<fr-menubar></fr-menubar><fr-left></fr-left><div class="strip">${ic('left')}</div>
<div class="mid"><fr-toolbars></fr-toolbars><fr-params></fr-params><fr-sheet></fr-sheet></div>
<fr-rail></fr-rail><fr-props></fr-props><fr-dialog role="dialog" aria-label="数据字典"></fr-dialog><fr-notes></fr-notes>`);
</script>
</body>
</html>
